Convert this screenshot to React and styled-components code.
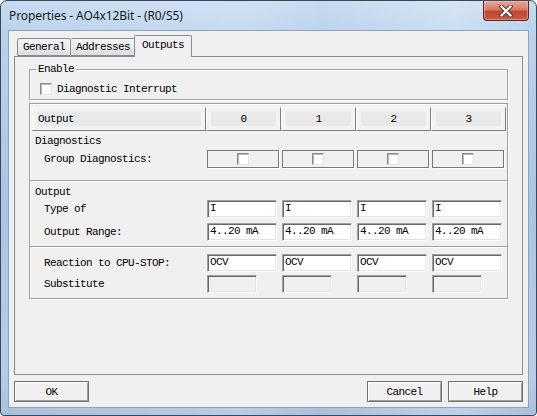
import styled, { createGlobalStyle } from "styled-components";

const GlobalStyle = createGlobalStyle`
  * { box-sizing: border-box; }
  html, body { margin: 0; padding: 0; background: #ffffff; }
  body {
    font-family: "Liberation Mono", "DejaVu Sans Mono", monospace;
    font-size: 11px;
    letter-spacing: -0.6px;
    color: #000;
  }
`;

const columns = ["0", "1", "2", "3"];

export default function App() {
  return (
    <>
      <GlobalStyle />
      <Window>
        <TitleBar>
          <Title>Properties - AO4x12Bit - (R0/S5)</Title>
          <CloseButton aria-label="Close">
            <svg width="14" height="12" viewBox="0 0 14 12">
              <path d="M2.5 1.5 L11.5 10.5 M11.5 1.5 L2.5 10.5" stroke="#4a3a38" strokeWidth="4.2" strokeLinecap="square" />
              <path d="M2.5 1.5 L11.5 10.5 M11.5 1.5 L2.5 10.5" stroke="#ffffff" strokeWidth="2.2" strokeLinecap="square" />
            </svg>
          </CloseButton>
        </TitleBar>
        <Client>
          <TabStrip>
            <Tab>General</Tab>
            <Tab>Addresses</Tab>
            <Tab $active>Outputs</Tab>
          </TabStrip>
          <Panel>
            <GroupBox>
              <Legend>Enable</Legend>
              <CheckRow>
                <CheckBox />
                <span>Diagnostic Interrupt</span>
              </CheckRow>
            </GroupBox>

            <TableBox>
              <Grid>
                <HeaderCell $left>Output</HeaderCell>
                {columns.map((c) => (
                  <HeaderCell key={c}>{c}</HeaderCell>
                ))}
              </Grid>

              <SectionLabel $top={3}>Diagnostics</SectionLabel>
              <Grid $top={2}>
                <RowLabel>Group Diagnostics:</RowLabel>
                {columns.map((c) => (
                  <Cell key={c}>
                    <DiagBox>
                      <CheckBox />
                    </DiagBox>
                  </Cell>
                ))}
              </Grid>

              <Separator $top={12} />

              <SectionLabel $top={3}>Output</SectionLabel>
              <Grid $top={1}>
                <RowLabel>Type of</RowLabel>
                {columns.map((c) => (
                  <Cell key={c}>
                    <Field>I</Field>
                  </Cell>
                ))}
              </Grid>
              <Grid $top={5}>
                <RowLabel>Output Range:</RowLabel>
                {columns.map((c) => (
                  <Cell key={c}>
                    <Field>4..20 mA</Field>
                  </Cell>
                ))}
              </Grid>

              <Separator $top={5} />

              <Grid $top={6}>
                <RowLabel>Reaction to CPU-STOP:</RowLabel>
                {columns.map((c) => (
                  <Cell key={c}>
                    <Field>OCV</Field>
                  </Cell>
                ))}
              </Grid>
              <Grid $top={3}>
                <RowLabel>Substitute</RowLabel>
                {columns.map((c) => (
                  <Cell key={c}>
                    <Field $disabled $width={50} />
                  </Cell>
                ))}
              </Grid>
            </TableBox>
          </Panel>
          <ButtonRow>
            <Button>OK</Button>
            <Spacer />
            <Button>Cancel</Button>
            <Button>Help</Button>
          </ButtonRow>
        </Client>
      </Window>
    </>
  );
}

const Window = styled.div`
  width: 537px;
  height: 416px;
  display: flex;
  flex-direction: column;
  padding: 0 7px 7px 7px;
  border: 1px solid #3a4858;
  border-radius: 7px 7px 4px 4px;
  background:
    linear-gradient(90deg, rgba(255,255,255,0) 0%, rgba(255,255,255,0.18) 45%, rgba(255,255,255,0) 60%, rgba(255,255,255,0.25) 85%, rgba(255,255,255,0) 100%),
    linear-gradient(180deg, #c6dbf1 0%, #bad2ec 8%, #a9c4e4 50%, #b6cde8 90%, #a8c0dc 100%);
`;

const TitleBar = styled.div`
  height: 29px;
  display: flex;
  align-items: flex-start;
`;

const Title = styled.div`
  flex: 1;
  padding: 6px 0 0 1px;
  font-family: "Noto Sans", "Open Sans", sans-serif;
  font-size: 12px;
  letter-spacing: -0.1px;
  color: #1a1a1a;
`;

const CloseButton = styled.div`
  width: 46px;
  height: 20px;
  display: flex;
  align-items: center;
  justify-content: center;
  border: 1px solid #5c2a24;
  border-top: none;
  border-radius: 0 0 4px 4px;
  background: linear-gradient(180deg, #e9a99b 0%, #d97a66 45%, #c2452e 55%, #c75b3f 100%);
  box-shadow: inset 0 0 0 1px rgba(255, 200, 190, 0.45);
`;

const Client = styled.div`
  flex: 1;
  display: flex;
  flex-direction: column;
  padding: 4px 5px 5px 5px;
  border: 1px solid #8aa3bf;
  background: #f0f0f0;
`;

const TabStrip = styled.div`
  height: 21px;
  display: flex;
  align-items: flex-end;
  padding-left: 3px;
  position: relative;
  z-index: 1;
`;

const Tab = styled.div`
  height: ${({ $active }) => ($active ? "22px" : "18px")};
  margin: ${({ $active }) => ($active ? "0 -2px -1px -2px" : "0")};
  padding: ${({ $active }) => ($active ? "3px 7px 0" : "2px 5px 0")};
  border: 1px solid #898c95;
  border-bottom: ${({ $active }) => ($active ? "none" : "1px solid #898c95")};
  border-left: ${({ $active }) => ($active ? "1px solid #898c95" : "none")};
  border-radius: 2px 2px 0 0;
  background: ${({ $active }) =>
    $active ? "#f0f0f0" : "linear-gradient(180deg, #f4f4f4 0%, #ebebeb 50%, #dddddd 100%)"};
  &:first-child {
    border-left: 1px solid #898c95;
  }
  white-space: nowrap;
`;

const Panel = styled.div`
  flex: 1;
  display: flex;
  flex-direction: column;
  padding: 6px 14px;
  border: 1px solid #898c95;
  background: #f0f0f0;
`;

const GroupBox = styled.fieldset`
  margin: 0;
  padding: 7px 10px 4px;
  min-width: 0;
  border: 1px solid #a0a0a0;
  box-shadow: inset 1px 1px 0 #ffffff, 1px 1px 0 #ffffff;
`;

const Legend = styled.legend`
  margin-left: -4px;
  padding: 0 2px 0 2px;
  line-height: 12px;
  background: #f0f0f0;
`;

const CheckRow = styled.div`
  height: 13px;
  display: flex;
  align-items: center;
  gap: 5px;
`;

const CheckBox = styled.span`
  display: inline-block;
  width: 12px;
  height: 12px;
  background: #ffffff;
  border: 1px solid;
  border-color: #8a8a8a #e3e3e3 #e3e3e3 #8a8a8a;
  box-shadow: inset 1px 1px 0 #b8b8b8;
`;

const TableBox = styled.div`
  margin-top: 3px;
  padding: 3px 1px 5px 2px;
  border: 1px solid #a0a0a0;
  box-shadow: inset 1px 1px 0 #ffffff, 1px 1px 0 #ffffff;
`;

const Grid = styled.div`
  display: grid;
  grid-template-columns: 174px repeat(4, 75px);
  align-items: center;
  margin-top: ${({ $top }) => $top || 0}px;
`;

const HeaderCell = styled.div`
  height: 24px;
  display: flex;
  align-items: center;
  justify-content: ${({ $left }) => ($left ? "flex-start" : "center")};
  padding-left: ${({ $left }) => ($left ? "5px" : "0")};
  border: 1px solid;
  border-color: #ffffff #7f7f7f #7f7f7f #ffffff;
  background: #e9e9e9;
  box-shadow: inset 0 0 0 4px #f3f3f3;
`;

const SectionLabel = styled.div`
  height: 14px;
  line-height: 15px;
  padding-left: 3px;
  margin-top: ${({ $top }) => $top || 0}px;
`;

const RowLabel = styled.div`
  padding-left: 12px;
  white-space: nowrap;
`;

const Cell = styled.div`
  padding-left: 1px;
  display: flex;
`;

const DiagBox = styled.div`
  width: 72px;
  height: 18px;
  display: flex;
  align-items: center;
  justify-content: center;
  border: 1px solid #7a7a7a;
  box-shadow: 1px 1px 0 #ffffff;
  background: #f0f0f0;
`;

const Field = styled.div`
  width: ${({ $width }) => $width || 70}px;
  height: 18px;
  line-height: 15px;
  padding-left: 2px;
  background: ${({ $disabled }) => ($disabled ? "#f0f0f0" : "#ffffff")};
  border: 1px solid;
  border-color: #a0a0a0 #ffffff #ffffff #a0a0a0;
  box-shadow: inset 1px 1px 0 #696969, inset -1px -1px 0 #e3e3e3;
  white-space: nowrap;
  overflow: hidden;
`;

const Separator = styled.div`
  height: 2px;
  margin: ${({ $top }) => $top || 0}px -1px 0 -2px;
  border-top: 1px solid #a0a0a0;
  border-bottom: 1px solid #ffffff;
`;

const ButtonRow = styled.div`
  margin-top: 6px;
  display: flex;
  gap: 6px;
`;

const Spacer = styled.div`
  flex: 1;
`;

const Button = styled.div`
  width: 75px;
  height: 21px;
  display: flex;
  align-items: center;
  justify-content: center;
  border: 1px solid #707070;
  background: #f0f0f0;
  box-shadow: inset 1px 1px 0 #ffffff, inset -1px -1px 0 #a0a0a0;
`;
